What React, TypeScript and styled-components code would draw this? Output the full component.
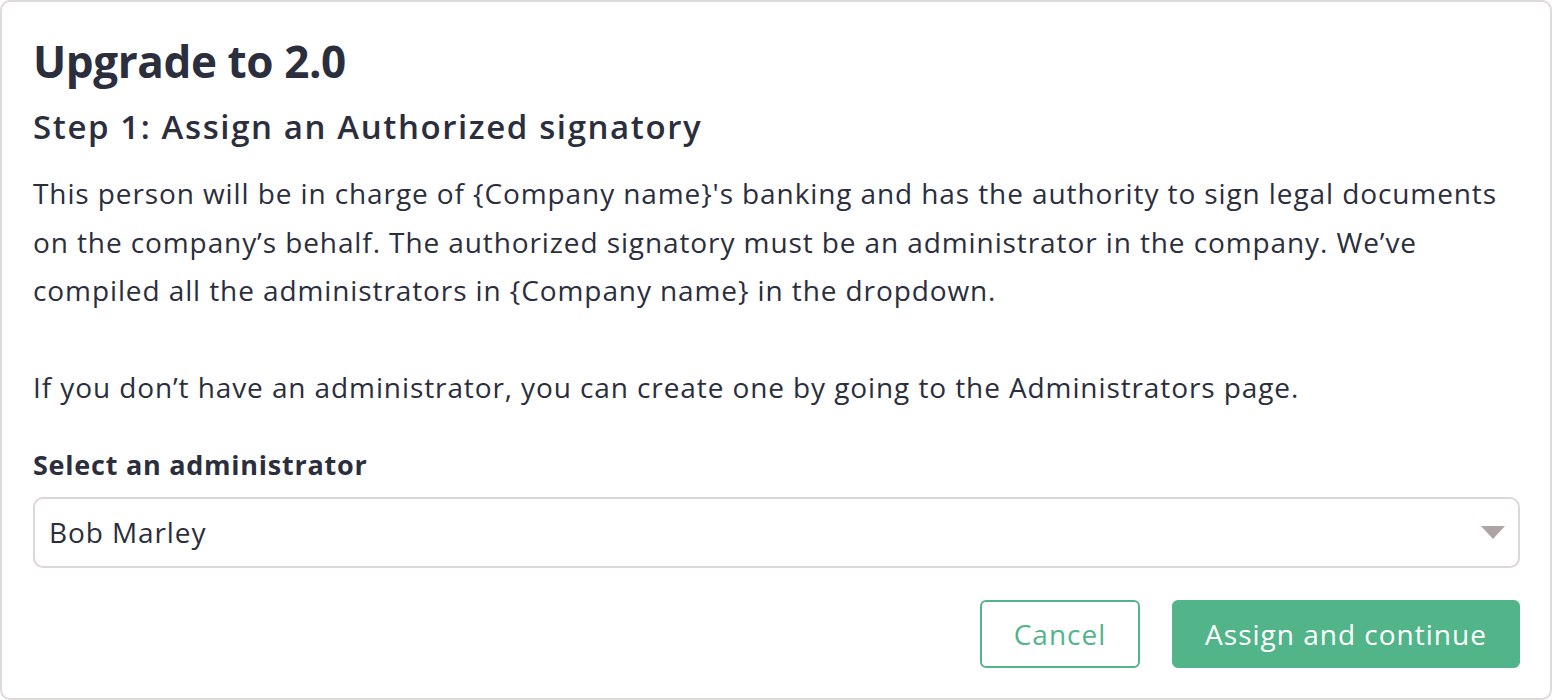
import React from "react";
import styled, { createGlobalStyle } from "styled-components";

const Global = createGlobalStyle`
  html, body { margin: 0; padding: 0; background: #ffffff; }
  body { font-family: "Open Sans", "Lato", sans-serif; color: #2b2e3d; }
  * { box-sizing: border-box; }
`;

const Card = styled.div`
  width: 1552px;
  height: 700px;
  border: 2px solid #dedada;
  border-radius: 10px;
  padding: 33px 30px 0 31px;
  display: flex;
  flex-direction: column;
`;

const Title = styled.h1`
  margin: 0;
  font-size: 44px;
  line-height: 52px;
  font-weight: 700;
  letter-spacing: -0.4px;
`;

const StepTitle = styled.h2`
  margin: 18px 0 0 0;
  font-size: 33px;
  line-height: 44px;
  font-weight: 600;
  letter-spacing: 1.6px;
`;

const Para = styled.p`
  margin: 20px 0 0 0;
  font-size: 28px;
  line-height: 48.5px;
  font-weight: 400;
  letter-spacing: 0.9px;
  white-space: nowrap;
`;

const Label = styled.div`
  margin-top: 35px;
  font-size: 27px;
  line-height: 36px;
  font-weight: 700;
  letter-spacing: 0.75px;
`;

const SelectBox = styled.div`
  margin-top: 14px;
  height: 71px;
  border: 2px solid #dcd7d7;
  border-radius: 10px;
  display: flex;
  align-items: center;
  justify-content: space-between;
  padding: 0 13px 0 14px;
  font-size: 28px;
  letter-spacing: 0.9px;
`;

const Arrow = styled.div`
  width: 0;
  height: 0;
  border-left: 12px solid transparent;
  border-right: 12px solid transparent;
  border-top: 13px solid #aea4a4;
`;

const Actions = styled.div`
  margin-top: 32px;
  display: flex;
  justify-content: flex-end;
  gap: 32px;
`;

const Button = styled.button<{ $primary?: boolean; $w: number }>`
  width: ${(p) => p.$w}px;
  height: 68px;
  border-radius: 6px;
  font-family: "Open Sans", sans-serif;
  font-size: 28px;
  letter-spacing: 1px;
  padding: 0;
  cursor: pointer;
  border: 2px solid #52b58a;
  background: ${(p) => (p.$primary ? "#52b58a" : "#ffffff")};
  color: ${(p) => (p.$primary ? "#ffffff" : "#52b58a")};
`;

export default function App() {
  return (
    <>
      <Global />
      <Card>
        <Title>Upgrade to 2.0</Title>
        <StepTitle>Step 1: Assign an Authorized signatory</StepTitle>
        <Para>
          This person will be in charge of {"{Company name}"}'s banking and has the authority to sign legal documents
          <br />
          on the company’s behalf. The authorized signatory must be an administrator in the company. We’ve
          <br />
          compiled all the administrators in {"{Company name}"} in the dropdown.
          <br />
          <br />
          If you don’t have an administrator, you can create one by going to the Administrators page.
        </Para>
        <Label>Select an administrator</Label>
        <SelectBox>
          <span>Bob Marley</span>
          <Arrow />
        </SelectBox>
        <Actions>
          <Button $w={160}>Cancel</Button>
          <Button $primary $w={348}>Assign and continue</Button>
        </Actions>
      </Card>
    </>
  );
}
